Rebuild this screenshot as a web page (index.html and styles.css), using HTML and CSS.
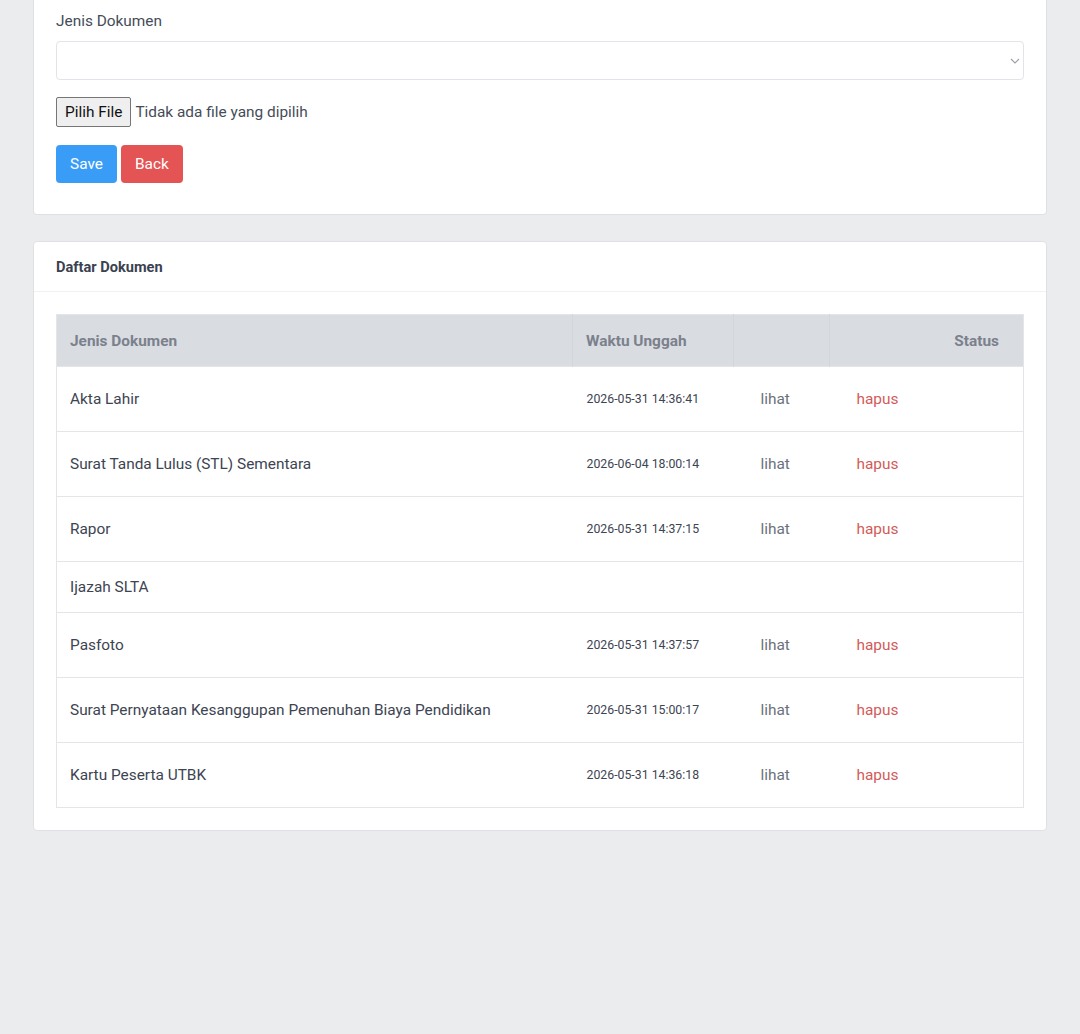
FILE: index.html
```html
<!DOCTYPE html>
<html lang="id">
<head>
    <meta charset="UTF-8">
    <meta name="viewport" content="width=device-width, initial-scale=1.0">
    <title>Upload Dokumen</title>
    <link rel="stylesheet" href="styles.css">
</head>
<body>
    <div class="page">
        <div class="card card-form">
            <div class="card-body">
                <div class="form-group">
                    <label class="form-label" for="jenisDokumen">Jenis Dokumen</label>
                    <div class="select-wrap">
                        <select id="jenisDokumen" class="form-select">
                            <option value=""></option>
                        </select>
                        <svg class="select-caret" width="10" height="6" viewBox="0 0 10 6"><path d="M1 1l4 4 4-4" fill="none" stroke="#9aa0a8" stroke-width="1.1"/></svg>
                    </div>
                </div>
                <div class="file-row">
                    <span class="file-btn">Pilih File</span>
                    <span class="file-name">Tidak ada file yang dipilih</span>
                </div>
                <div class="actions">
                    <button class="btn btn-primary">Save</button>
                    <button class="btn btn-danger">Back</button>
                </div>
            </div>
        </div>

        <div class="card">
            <div class="card-header">Daftar Dokumen</div>
            <div class="card-body">
                <table class="doc-table">
                    <colgroup>
                        <col class="col-jenis">
                        <col class="col-waktu">
                        <col class="col-lihat">
                        <col class="col-status">
                    </colgroup>
                    <thead>
                        <tr>
                            <th>Jenis Dokumen</th>
                            <th>Waktu Unggah</th>
                            <th></th>
                            <th class="th-status">Status</th>
                        </tr>
                    </thead>
                    <tbody>
                        <tr>
                            <td>Akta Lahir</td>
                            <td class="td-date">2026-05-31 14:36:41</td>
                            <td><a class="link-view" href="#">lihat</a></td>
                            <td><a class="link-delete" href="#">hapus</a></td>
                        </tr>
                        <tr>
                            <td>Surat Tanda Lulus (STL) Sementara</td>
                            <td class="td-date">2026-06-04 18:00:14</td>
                            <td><a class="link-view" href="#">lihat</a></td>
                            <td><a class="link-delete" href="#">hapus</a></td>
                        </tr>
                        <tr>
                            <td>Rapor</td>
                            <td class="td-date">2026-05-31 14:37:15</td>
                            <td><a class="link-view" href="#">lihat</a></td>
                            <td><a class="link-delete" href="#">hapus</a></td>
                        </tr>
                        <tr>
                            <td>Ijazah SLTA</td>
                            <td></td>
                            <td></td>
                            <td></td>
                        </tr>
                        <tr>
                            <td>Pasfoto</td>
                            <td class="td-date">2026-05-31 14:37:57</td>
                            <td><a class="link-view" href="#">lihat</a></td>
                            <td><a class="link-delete" href="#">hapus</a></td>
                        </tr>
                        <tr>
                            <td>Surat Pernyataan Kesanggupan Pemenuhan Biaya Pendidikan</td>
                            <td class="td-date">2026-05-31 15:00:17</td>
                            <td><a class="link-view" href="#">lihat</a></td>
                            <td><a class="link-delete" href="#">hapus</a></td>
                        </tr>
                        <tr>
                            <td>Kartu Peserta UTBK</td>
                            <td class="td-date">2026-05-31 14:36:18</td>
                            <td><a class="link-view" href="#">lihat</a></td>
                            <td><a class="link-delete" href="#">hapus</a></td>
                        </tr>
                    </tbody>
                </table>
            </div>
        </div>
    </div>
</body>
</html>
```

FILE: styles.css
```css
body {
    font-family: Roboto, "Liberation Sans", Arial, sans-serif;
    font-size: 15.4px;
    line-height: 24px;
    background-color: #ebecee;
    color: #3d4452;
    margin: 0;
}
.page {
    padding: 0 33px 40px 33px;
}
.card {
    background-color: #fff;
    border: 1px solid #dfe1e5;
    border-radius: 4px;
    margin-bottom: 26px;
}
.card-form {
    border-top: none;
    border-top-left-radius: 0;
    border-top-right-radius: 0;
}
.card-form .card-body {
    padding-top: 9px;
    padding-bottom: 31px;
}
.card-header {
    padding: 13px 22px 12px 22px;
    font-size: 14.6px;
    font-weight: 700;
    color: #3a4150;
    border-bottom: 1px solid #f0f1f3;
}
.card-body {
    padding: 22px 22px 22px 22px;
}
.form-label {
    display: block;
    margin-bottom: 8px;
    color: #454c58;
}
.select-wrap {
    position: relative;
}
.form-select {
    display: block;
    width: 100%;
    height: 39px;
    border: 1px solid #e1e4e8;
    border-radius: 4px;
    background-color: #fff;
    appearance: none;
    -webkit-appearance: none;
    font: inherit;
    box-sizing: border-box;
}
.select-caret {
    position: absolute;
    right: 4px;
    top: 17px;
}
.file-row {
    display: flex;
    align-items: center;
    margin-top: 17px;
}
.file-btn {
    display: inline-block;
    height: 30px;
    line-height: 28px;
    padding: 0 8px;
    border: 1px solid #767676;
    border-radius: 2px;
    background-color: #efefef;
    color: #111;
    box-sizing: border-box;
}
.file-name {
    margin-left: 4px;
    color: #454c58;
}
.actions {
    display: flex;
    gap: 4px;
    margin-top: 18px;
}
.btn {
    height: 38px;
    padding: 0 14px;
    border: none;
    border-radius: 4px;
    font: inherit;
    color: #fff;
    cursor: pointer;
}
.btn-primary {
    background-color: #399cf7;
}
.btn-danger {
    background-color: #e55454;
}
.doc-table {
    width: 100%;
    table-layout: fixed;
    border-collapse: collapse;
    border: 1px solid #e3e5e8;
}
.col-jenis { width: 516px; }
.col-waktu { width: 161px; }
.col-lihat { width: 96px; }
.col-status { width: 194px; }
.doc-table th {
    background-color: #d9dce1;
    color: #7b818c;
    font-weight: 700;
    text-align: left;
    padding: 14px 13px 13px 13px;
    border-right: 1px solid #d3d6db;
}
.doc-table th:last-child {
    border-right: none;
}
.doc-table .th-status {
    text-align: right;
    padding-right: 24px;
}
.doc-table td {
    padding: 13px 13px;
    border-top: 1px solid #e3e5e8;
    vertical-align: middle;
}
.doc-table .td-date {
    font-size: 12.3px;
    color: #3d4452;
    padding-left: 14px;
}
.link-view, .link-delete {
    display: inline-block;
    padding: 7px 14px;
    text-decoration: none;
}
.link-view {
    color: #6b717b;
}
.link-delete {
    color: #d35a5a;
}
```
